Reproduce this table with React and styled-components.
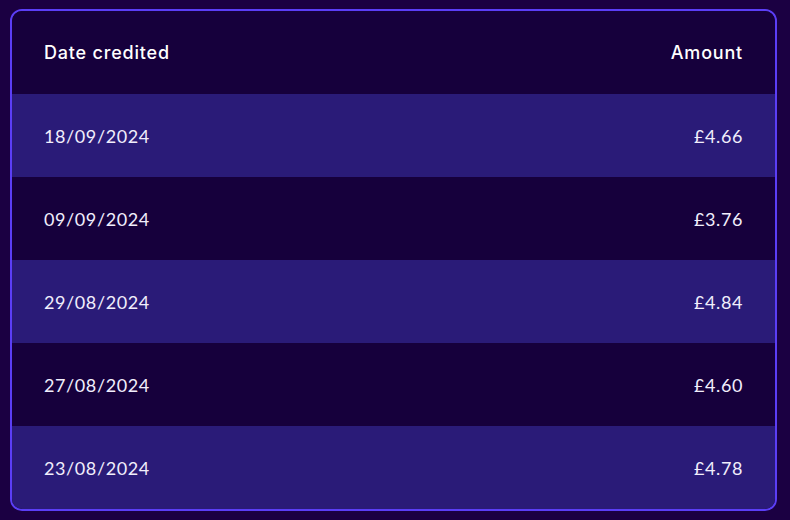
import React from 'react';
import styled, { createGlobalStyle } from 'styled-components';

const GlobalStyle = createGlobalStyle`
body {
  margin: 0;
  background: #1b0042;
  font-family: Lato, "Open Sans", sans-serif;
}
`

const Page = styled.div`
padding: 9px 13px 10px 10px;
`

const Card = styled.div`
border: 2px solid #5b3ef6;
border-radius: 12px;
overflow: hidden;
background: #16003c;
`

const Row = styled.div`
display: flex;
align-items: center;
justify-content: space-between;
height: 83px;
padding: 0 32px;
background: ${p => (p.striped ? '#2a1b78' : '#16003c')};
color: #f1eefc;
font-size: 18px;
letter-spacing: 0.6px;
`

const HeadRow = styled(Row)`
font-family: Inter, "Open Sans", sans-serif;
font-size: 18px;
font-weight: 500;
letter-spacing: 0.8px;
color: #ffffff;
`

const rows = [
  ['18/09/2024', '£4.66'],
  ['09/09/2024', '£3.76'],
  ['29/08/2024', '£4.84'],
  ['27/08/2024', '£4.60'],
  ['23/08/2024', '£4.78'],
];

const App = () => {
  return (
    <Page>
      <GlobalStyle />
      <Card>
        <HeadRow>
          <span>Date credited</span>
          <span>Amount</span>
        </HeadRow>
        {rows.map(([date, amount], i) => (
          <Row key={date} striped={i % 2 === 0}>
            <span>{date}</span>
            <span>{amount}</span>
          </Row>
        ))}
      </Card>
    </Page>
  );
}

export default App;
